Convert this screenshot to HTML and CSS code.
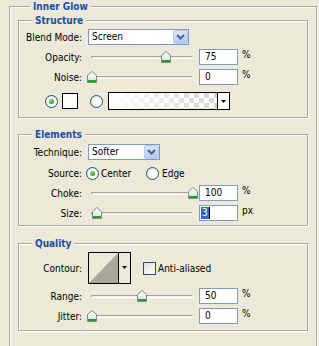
FILE: index.html
```html
<!DOCTYPE html>
<html>
<head>
<meta charset="utf-8">
<link rel="stylesheet" href="styles.css">
</head>
<body>
<fieldset class="grp outer">
  <legend>Inner Glow</legend>

  <fieldset class="grp sub structure">
    <legend>Structure</legend>
    <div class="row r-first">
      <span class="lbl">Blend Mode:</span>
      <div class="select w-blend"><span class="val">Screen</span><span class="btn"><svg width="9" height="6" viewBox="0 0 9 6"><path d="M1 1 L4.5 4.5 L8 1" fill="none" stroke="#4d6185" stroke-width="2"/></svg></span></div>
    </div>
    <div class="row r4">
      <span class="lbl">Opacity:</span>
      <div class="slider"><div class="track"></div><div class="thumb" style="left:73px"><svg width="10" height="12" viewBox="0 0 10 12"><defs><linearGradient id="tg1" x1="0" y1="0" x2="0" y2="1"><stop offset="0" stop-color="#ffffff"/><stop offset="1" stop-color="#dcdcd4"/></linearGradient></defs><path d="M0.5 4.5 L5 0.5 L9.5 4.5 L9.5 11.5 L0.5 11.5 Z" fill="url(#tg1)" stroke="#7b8a8f"/><rect x="1" y="9" width="8" height="2" fill="#21a121"/></svg></div></div>
      <span class="num">75</span><span class="unit">%</span>
    </div>
    <div class="row r4">
      <span class="lbl">Noise:</span>
      <div class="slider"><div class="track"></div><div class="thumb" style="left:-1px"><svg width="10" height="12" viewBox="0 0 10 12"><path d="M0.5 4.5 L5 0.5 L9.5 4.5 L9.5 11.5 L0.5 11.5 Z" fill="url(#tg1)" stroke="#7b8a8f"/><rect x="1" y="9" width="8" height="2" fill="#21a121"/></svg></div></div>
      <span class="num">0</span><span class="unit">%</span>
    </div>
    <div class="row color-row">
      <span class="radio checked"></span>
      <span class="swatch"></span>
      <span class="radio r-gap"></span>
      <div class="gradbox"><span class="grad"></span><span class="gbtn"><svg width="5" height="3" viewBox="0 0 5 3"><path d="M0 0 H5 L2.5 3 Z" fill="#000"/></svg></span></div>
    </div>
  </fieldset>

  <fieldset class="grp sub elements">
    <legend>Elements</legend>
    <div class="row r-first3">
      <span class="lbl">Technique:</span>
      <div class="select w-tech"><span class="val">Softer</span><span class="btn"><svg width="9" height="6" viewBox="0 0 9 6"><path d="M1 1 L4.5 4.5 L8 1" fill="none" stroke="#4d6185" stroke-width="2"/></svg></span></div>
    </div>
    <div class="row r5">
      <span class="lbl tight">Source:</span>
      <span class="opt first"><span class="radio checked"></span><span class="otext">Center</span></span>
      <span class="opt"><span class="radio"></span><span class="otext">Edge</span></span>
    </div>
    <div class="row r4">
      <span class="lbl">Choke:</span>
      <div class="slider"><div class="track"></div><div class="thumb" style="left:100px"><svg width="10" height="12" viewBox="0 0 10 12"><path d="M0.5 4.5 L5 0.5 L9.5 4.5 L9.5 11.5 L0.5 11.5 Z" fill="url(#tg1)" stroke="#7b8a8f"/><rect x="1" y="9" width="8" height="2" fill="#21a121"/></svg></div></div>
      <span class="num">100</span><span class="unit">%</span>
    </div>
    <div class="row r4">
      <span class="lbl">Size:</span>
      <div class="slider"><div class="track"></div><div class="thumb" style="left:4px"><svg width="10" height="12" viewBox="0 0 10 12"><path d="M0.5 4.5 L5 0.5 L9.5 4.5 L9.5 11.5 L0.5 11.5 Z" fill="url(#tg1)" stroke="#7b8a8f"/><rect x="1" y="9" width="8" height="2" fill="#21a121"/></svg></div></div>
      <span class="num focus"><span class="sel">3</span><span class="caret"></span></span><span class="unit">px</span>
    </div>
  </fieldset>

  <fieldset class="grp sub quality">
    <legend>Quality</legend>
    <div class="row contour-row">
      <span class="lbl">Contour:</span>
      <div class="contour"><span class="curve"><svg width="29" height="30" viewBox="0 0 29 30"><path d="M0 30 L29 0 L29 30 Z" fill="#aca899"/></svg></span><span class="cbtn"><svg width="5" height="3" viewBox="0 0 5 3"><path d="M0 0 H5 L2.5 3 Z" fill="#000"/></svg></span></div>
      <span class="check"></span><span class="ctext">Anti-aliased</span>
    </div>
    <div class="row r4">
      <span class="lbl">Range:</span>
      <div class="slider"><div class="track"></div><div class="thumb" style="left:49px"><svg width="10" height="12" viewBox="0 0 10 12"><path d="M0.5 4.5 L5 0.5 L9.5 4.5 L9.5 11.5 L0.5 11.5 Z" fill="url(#tg1)" stroke="#7b8a8f"/><rect x="1" y="9" width="8" height="2" fill="#21a121"/></svg></div></div>
      <span class="num">50</span><span class="unit">%</span>
    </div>
    <div class="row r4">
      <span class="lbl">Jitter:</span>
      <div class="slider"><div class="track"></div><div class="thumb" style="left:-1px"><svg width="10" height="12" viewBox="0 0 10 12"><path d="M0.5 4.5 L5 0.5 L9.5 4.5 L9.5 11.5 L0.5 11.5 Z" fill="url(#tg1)" stroke="#7b8a8f"/><rect x="1" y="9" width="8" height="2" fill="#21a121"/></svg></div></div>
      <span class="num">0</span><span class="unit">%</span>
    </div>
  </fieldset>
</fieldset>
</body>
</html>
```

FILE: styles.css
```css
html, body {
  margin: 0;
  padding: 0;
  background: #ece9d8;
  overflow: hidden;
}
body {
  font-family: "DejaVu Sans Condensed", "DejaVu Sans", sans-serif;
  font-size: 10px;
  color: #000;
  width: 319px;
  height: 346px;
}
fieldset.grp {
  margin: 0;
  padding: 0;
  border: 1px solid #aca899;
  box-shadow: 1px 1px 0 #fff, inset 1px 1px 0 #fff;
  min-width: 0;
}
fieldset.grp > legend {
  font-weight: bold;
  color: #1a4ea6;
  line-height: 13px;
  height: 13px;
  padding: 0 3px;
  background: #ece9d8;
}
.outer {
  margin-left: 9px !important;
  width: 308px;
  box-sizing: border-box;
  padding: 1px 8px 0 !important;
  height: 347px;
}
.outer > legend {
  margin-left: 12px;
}
.sub > legend {
  margin-left: 13px;
}
.structure {
  padding: 2px 0 7px !important;
}
.elements {
  margin-top: 10px !important;
  padding: 3px 0 4px !important;
}
.quality {
  margin-top: 11px !important;
  padding: 2px 0 6px !important;
}
.row {
  display: flex;
  align-items: center;
  height: 16px;
}
.r4 { margin-top: 4px; }
.r5 { margin-top: 5px; }
.lbl {
  width: 63px;
  text-align: right;
  margin-right: 6px;
  white-space: nowrap;
}
.lbl.tight { margin-right: 4px; }

.select {
  box-sizing: border-box;
  height: 16px;
  border: 1px solid #7f9db9;
  background: #fff;
  display: flex;
  align-items: center;
}
.w-blend { width: 101px; }
.w-tech { width: 72px; }
.select .val {
  flex: 1;
  padding-left: 3px;
  line-height: 14px;
}
.select .btn {
  width: 15px;
  height: 14px;
  box-sizing: border-box;
  border: 1px solid #b8c9f1;
  border-radius: 2px;
  background: linear-gradient(#dbe6fd, #b5c9f7);
  display: flex;
  align-items: center;
  justify-content: center;
}

.slider {
  position: relative;
  width: 111px;
  height: 16px;
}
.track {
  position: absolute;
  left: 3px;
  top: 7px;
  width: 102px;
  height: 3px;
  box-sizing: border-box;
  border-top: 1px solid #a3a096;
  border-left: 1px solid #a3a096;
  border-bottom: 1px solid #fff;
  border-right: 1px solid #fff;
  background: #f1efe2;
  border-radius: 1px;
}
.thumb {
  position: absolute;
  top: 2px;
  width: 10px;
  height: 12px;
}
.thumb svg { display: block; }

.num {
  box-sizing: border-box;
  width: 39px;
  height: 16px;
  border: 1px solid #7f9db9;
  background: #fff;
  padding-left: 5px;
  line-height: 14px;
  display: flex;
  align-items: center;
}
.num.focus { padding-left: 1px; }
.sel {
  background: #316ac5;
  color: #fff;
  padding: 0 1px;
  line-height: 12px;
  height: 12px;
}
.caret {
  display: inline-block;
  width: 1px;
  height: 12px;
  background: #000;
}
.unit {
  align-self: flex-start;
  margin-left: 4px;
  line-height: 11px;
}

.color-row {
  margin-top: 7px;
  height: 18px;
  padding-left: 26px;
}
.radio {
  position: relative;
  box-sizing: border-box;
  width: 13px;
  height: 13px;
  border-radius: 50%;
  border: 1px solid #1c5180;
  background: radial-gradient(circle at 65% 65%, #ffffff 30%, #dcdcd5 100%);
  flex: none;
}
.radio.checked::after {
  content: "";
  position: absolute;
  left: 3px;
  top: 3px;
  width: 5px;
  height: 5px;
  border-radius: 50%;
  background: radial-gradient(circle at 40% 40%, #8fe08f, #21a121 70%);
}
.swatch {
  box-sizing: border-box;
  width: 16px;
  height: 16px;
  border: 1px solid #000;
  background: #fff;
  margin-left: 4px;
}
.r-gap { margin-left: 12px; }
.gradbox {
  box-sizing: border-box;
  margin-left: 5px;
  width: 122px;
  height: 18px;
  border: 1px solid #000;
  display: flex;
}
.grad {
  flex: 1;
  background:
    linear-gradient(to right, #fff 0%, rgba(255,255,255,0) 100%),
    repeating-conic-gradient(#d4d4d4 0 25%, #fff 0 50%) 0 0 / 10px 10px;
}
.gbtn {
  width: 11px;
  border-left: 1px solid #000;
  background: #fff;
  display: flex;
  align-items: center;
  justify-content: center;
}

.opt {
  display: flex;
  align-items: center;
}
.opt.first { width: 60px; }
.otext { margin-left: 2px; }
.opt:not(.first) .otext { margin-left: 3px; }

.contour-row {
  height: 32px;
}
.contour {
  box-sizing: border-box;
  width: 43px;
  height: 32px;
  border: 1px solid #000;
  display: flex;
}
.curve {
  width: 29px;
  display: flex;
  align-items: flex-end;
  border-right: 1px solid #000;
}
.curve svg { display: block; }
.cbtn {
  flex: 1;
  display: flex;
  align-items: center;
  justify-content: center;
  padding-bottom: 2px;
}
.check {
  box-sizing: border-box;
  width: 13px;
  height: 13px;
  border: 1px solid #1c5180;
  background: linear-gradient(135deg, #dcdcd7, #ffffff);
  margin-left: 12px;
}
.ctext { margin-left: 2px; }
```
